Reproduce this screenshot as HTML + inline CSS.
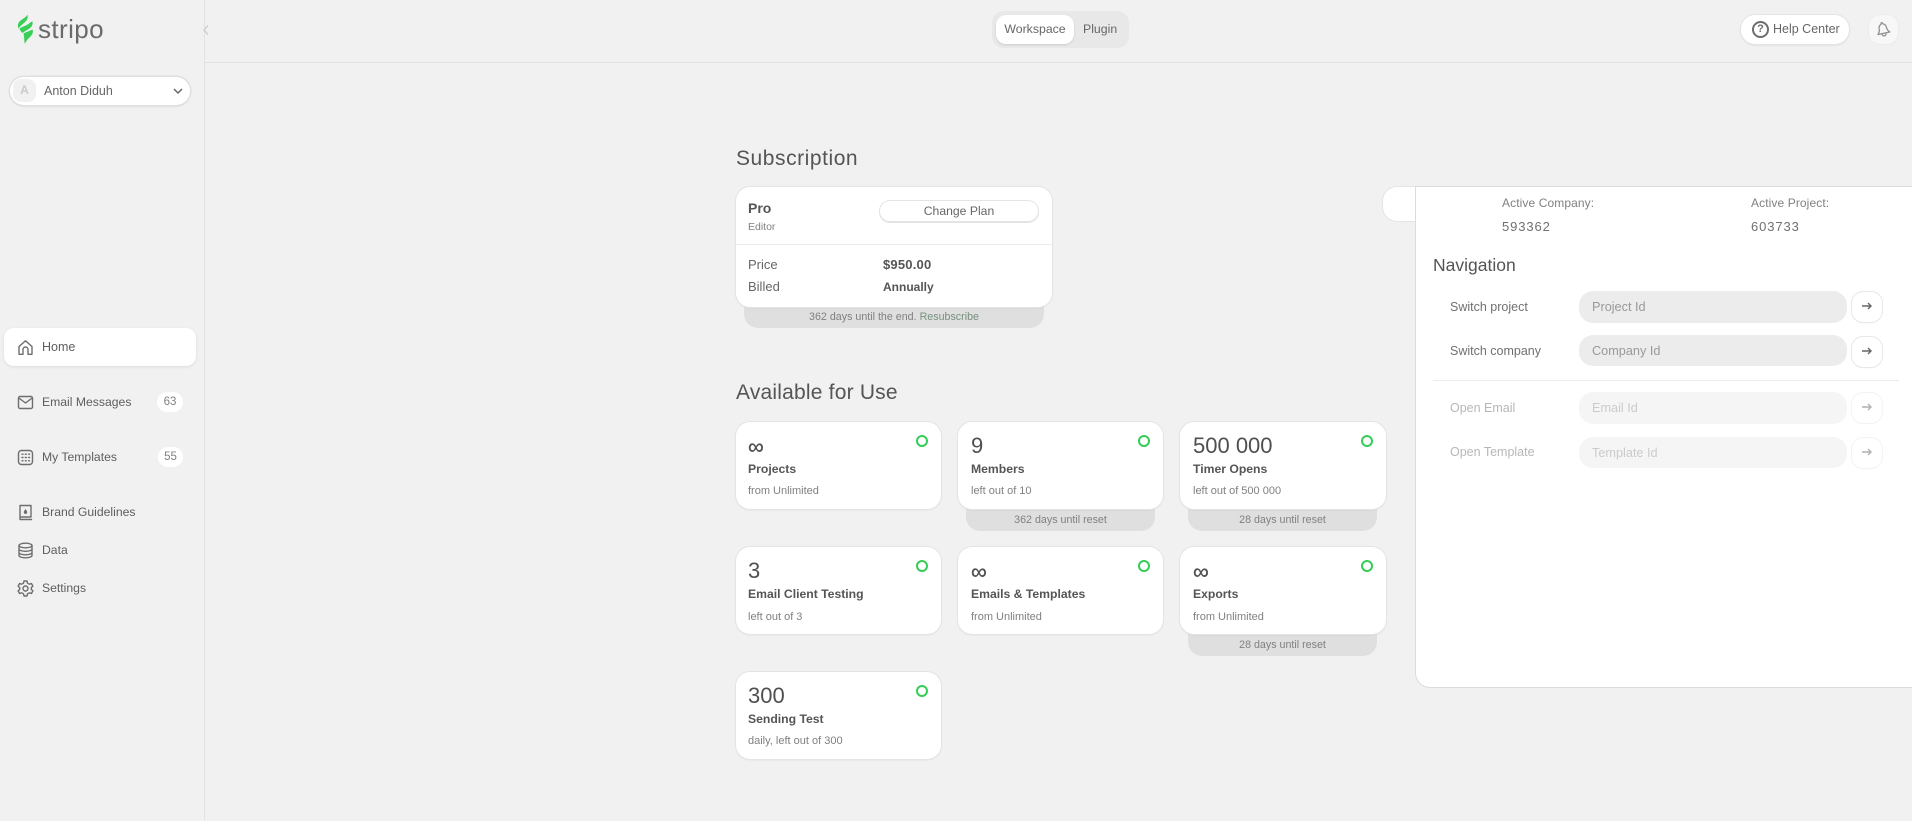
<!DOCTYPE html>
<html><head><meta charset="utf-8"><title>Stripo</title>
<style>
html,body{margin:0;padding:0;width:1912px;height:821px;overflow:hidden;background:#f1f1f1}
body{position:relative;font-family:"Liberation Sans",sans-serif;color:#555}
.a,.t{position:absolute}
.t{white-space:nowrap;line-height:20px;height:20px}
.card{position:absolute;background:#fff;border-radius:14px;box-shadow:0 0 0 1px #e4e4e4,0 1px 2px rgba(0,0,0,.08);}
.foot{position:absolute;background:#dfdfdf;border-radius:0 0 14px 14px;text-align:center;font-size:10.7px;line-height:22px;color:#808080;height:22px}
.dot{position:absolute;width:8.4px;height:8.4px;border:2.8px solid #35cd57;border-radius:50%;margin-top:.5px;margin-left:.5px}
.num{font-size:22px;color:#4f4f4f}
.inf{-webkit-text-stroke:.3px #4f4f4f}
.ti{font-size:12.2px;font-weight:bold;color:#555}
.su{font-size:11px;color:#808080}
.nav{font-size:12.2px;color:#5e5e5e}
.inp{position:absolute;left:1579px;width:268px;height:32px;background:#ececec;border-radius:14px;color:#999;font-size:12.7px;line-height:32px;text-indent:13px}
.btn{position:absolute;left:1852px;width:30px;height:30px;background:#fff;border-radius:11px;box-shadow:0 0 0 1px #e8e8e8,0 1px 1px 0 #e4e4e4}
.btn svg{position:absolute;left:9px;top:8px}
.fade{opacity:.5}
.ic{position:absolute;fill:none;stroke:#6e6e6e;stroke-width:1.4;stroke-linejoin:round;stroke-linecap:round}
.bdg{position:absolute;background:#fff;border-radius:10px;height:20px;line-height:20px;text-align:center;font-size:11.5px;color:#808080}
</style></head><body>

<!-- chrome lines -->
<div class="a" style="left:204px;top:0;width:1px;height:821px;background:#e2e2e2"></div>
<div class="a" style="left:204px;top:62px;width:1708px;height:1px;background:#e2e2e2"></div>

<!-- logo -->
<svg class="a" style="left:16px;top:12px" width="20" height="34" viewBox="0 0 20 34">
<path fill="#37cf55" d="M11.500 2.500 C12 6 11.500 8 8 11 C5.500 13 3.800 14.500 2.500 16.500 C1.500 13.500 1.800 11 4 9 C7 6.500 10 5.500 11.500 2.500Z"/>
<path fill="#37cf55" d="M3.500 16.500 C7 14.300 10.800 13.500 13 11.500 C13.800 10.800 14.500 10.300 16.500 9.500 C17 12.500 16 14.500 13.500 16.500 C10.500 18.500 8 19.500 6.500 21 C5 19.700 4 18.200 3.500 16.500Z"/>
<path fill="#37cf55" d="M7.500 21.500 C10 20 13 19.200 16.500 17.500 C17.500 20 16.500 22.500 14.500 24.500 C12 27 10.300 28.500 8.800 32 C8 28.500 8.500 25 7.500 21.500Z"/>
</svg>
<div class="t" style="left:38px;top:13px;font-size:26px;line-height:32px;height:32px;color:#6a6a6a;letter-spacing:.4px">stripo</div>
<svg class="a" style="left:202px;top:24px" width="8" height="12" viewBox="0 0 8 12"><path d="M6 1.500 L2 6 L6 10.500" fill="none" stroke="#d0d0d0" stroke-width="1.500"/></svg>

<!-- user select -->
<div class="a" style="left:10px;top:77px;width:180px;height:28px;background:#fff;border-radius:14px;box-shadow:0 0 0 1.500px #e0e0e0,0 1px 1px 1px #e0e0e0"></div>
<div class="a" style="left:13px;top:79px;width:23px;height:23px;background:#f1f1f1;border-radius:8px;color:#cacaca;font-size:12px;font-weight:bold;line-height:23px;text-align:center">A</div>
<div class="t" style="left:44px;top:81px;font-size:12.5px;color:#666">Anton Diduh</div>
<svg class="a" style="left:172px;top:87px" width="12" height="8" viewBox="0 0 12 8"><path d="M2 2 L6 6 L10 2" fill="none" stroke="#666" stroke-width="1.500"/></svg>

<!-- nav -->
<div class="a" style="left:4px;top:328px;width:192px;height:38px;background:#fff;border-radius:10px;box-shadow:0 1px 3px rgba(0,0,0,.09)"></div>
<svg class="ic" style="left:17px;top:339px" width="17" height="17" viewBox="0 0 17 17"><path d="M2 7.500 L8.500 1.800 L15 7.500 V15.300 H11 V10.500 A2.500 2.500 0 0 0 6 10.500 V15.300 H2Z"/></svg>
<div class="t nav" style="left:42px;top:337px;font-size:12.500px">Home</div>

<svg class="ic" style="left:17px;top:394px" width="17" height="17" viewBox="0 0 17 17"><rect x="1.500" y="2.500" width="14" height="12" rx="1.500"/><path d="M2.500 4.500 L8.500 9 L14.500 4.500"/></svg>
<div class="t nav" style="left:42px;top:392px">Email Messages</div>
<div class="bdg" style="left:157px;top:392px;width:26px">63</div>

<svg class="ic" style="left:17px;top:449px" width="17" height="17" viewBox="0 0 17 17"><rect x="1.500" y="1.500" width="14" height="14" rx="3"/><path stroke-dasharray="1 2.300" d="M5 5.200 H12.500 M5 8.500 H12.500 M5 11.800 H12.500"/></svg>
<div class="t nav" style="left:42px;top:447px">My Templates</div>
<div class="bdg" style="left:158px;top:447px;width:25px">55</div>

<svg class="ic" style="left:17px;top:504px" width="17" height="17" viewBox="0 0 17 17"><path d="M3 1.500 H14 V13 H3Z M3 13 V15.500 H14.500"/><path d="M8.500 5 C7.500 6.500 6.800 7.200 6.800 8.200 A1.700 1.700 0 0 0 10.200 8.200 C10.200 7.200 9.500 6.500 8.500 5Z" fill="#6e6e6e" stroke="none"/></svg>
<div class="t nav" style="left:42px;top:502px">Brand Guidelines</div>

<svg class="ic" style="left:17px;top:542px" width="17" height="17" viewBox="0 0 17 17"><ellipse cx="8.500" cy="3.500" rx="6.500" ry="2.300"/><path d="M2 3.500 V13.500 C2 14.800 5 15.800 8.500 15.800 C12 15.800 15 14.800 15 13.500 V3.500 M2 7 C2 8.300 5 9.300 8.500 9.300 C12 9.300 15 8.300 15 7 M2 10.500 C2 11.800 5 12.800 8.500 12.800 C12 12.800 15 11.800 15 10.500"/></svg>
<div class="t nav" style="left:42px;top:540px">Data</div>

<svg class="ic" style="left:17px;top:580px" width="17" height="17" viewBox="0 0 17 17"><circle cx="8.500" cy="8.500" r="2.500"/><path d="M7 1 H10 L10.500 3.200 L12.300 4.200 L14.400 3.500 L15.900 6.100 L14.300 7.600 V9.400 L15.900 10.900 L14.400 13.500 L12.300 12.800 L10.500 13.800 L10 16 H7 L6.500 13.800 L4.700 12.800 L2.600 13.500 L1.100 10.900 L2.700 9.400 V7.600 L1.100 6.100 L2.600 3.500 L4.700 4.200 L6.500 3.200Z"/></svg>
<div class="t nav" style="left:42px;top:578px">Settings</div>

<!-- toggle -->
<div class="a" style="left:992px;top:11px;width:137px;height:37px;background:#e8e8e8;border-radius:12px"></div>
<div class="a" style="left:996px;top:15px;width:78px;height:29px;background:#fff;border-radius:10px;box-shadow:0 1px 2px rgba(0,0,0,.12)"></div>
<div class="t" style="left:996px;top:19px;width:78px;text-align:center;font-size:12.3px;color:#666">Workspace</div>
<div class="t" style="left:1083px;top:19px;font-size:12.3px;color:#666">Plugin</div>

<!-- help -->
<div class="a" style="left:1741px;top:15px;width:108px;height:29px;background:#fff;border-radius:14px;box-shadow:0 0 0 1px #e4e4e4,0 1px 1px 1px #e4e4e4"></div>
<div class="a" style="left:1752px;top:21px;width:13px;height:13px;border:2px solid #6e6e6e;border-radius:50%;font-size:11px;font-weight:bold;line-height:13px;text-align:center;color:#6e6e6e">?</div>
<div class="t" style="left:1773px;top:19px;font-size:12.5px;color:#666">Help Center</div>
<div class="a" style="left:1869px;top:15px;width:29px;height:29px;background:#f7f7f7;border-radius:11px;box-shadow:0 0 0 1px #ececec"></div>
<svg class="a" style="left:1875px;top:21px" width="16" height="17" viewBox="0 0 16 17"><path d="M7.500 1.500 A1.500 1.500 0 0 1 9 3 C11 3.800 11.800 5.500 11.800 7.500 C11.800 10 13 11.300 14 12.300 H2 C3 11.300 4.200 10 4.200 7.500 C4.200 5.500 5 3.800 7 3 Z M6 13 A2 2 0 0 0 10 13" fill="none" stroke="#909090" stroke-width="1.300" stroke-linejoin="round" transform="rotate(-12 8 8)"/></svg>

<!-- Subscription -->
<div class="t" style="left:736px;top:149px;font-size:21px;color:#555;letter-spacing:.55px">Subscription</div>
<div class="foot" style="left:744px;top:306px;width:300px;height:22px">362 days until the end. <span style="color:#76917f">Resubscribe</span></div>
<div class="card" style="left:736px;top:187px;width:316px;height:120px"></div>
<div class="t" style="left:748px;top:198px;font-size:14px;font-weight:bold;color:#555">Pro</div>
<div class="t" style="left:748px;top:217px;font-size:10.5px;color:#808080">Editor</div>
<div class="a" style="left:880px;top:201px;width:158px;height:20px;background:#fff;border-radius:11px;box-shadow:0 0 0 1px #e4e4e4,0 1px 0 1px #e4e4e4;text-align:center;font-size:12.2px;line-height:20px;color:#666">Change Plan</div>
<div class="a" style="left:736px;top:244px;width:316px;height:1px;background:#ebebeb"></div>
<div class="t" style="left:748px;top:255px;font-size:13px;color:#666">Price</div>
<div class="t" style="left:748px;top:277px;font-size:13px;color:#666">Billed</div>
<div class="t" style="left:883px;top:255px;font-size:13px;font-weight:bold;color:#555;letter-spacing:.2px">$950.00</div>
<div class="t" style="left:883px;top:277px;font-size:12px;font-weight:bold;color:#555">Annually</div>

<!-- Available -->
<div class="t" style="left:736px;top:383px;font-size:21px;color:#555;letter-spacing:.2px">Available for Use</div>

<div class="foot" style="left:966px;top:508px;width:189px;height:23px;line-height:24px">362 days until reset</div>
<div class="foot" style="left:1188px;top:508px;width:189px;height:23px;line-height:24px">28 days until reset</div>
<div class="foot" style="left:1188px;top:633px;width:189px;height:23px;line-height:24px">28 days until reset</div>

<div class="card" style="left:736px;top:422px;width:205px;height:87px"></div>
<div class="dot" style="left:915px;top:434px"></div>
<div class="t num inf" style="left:748px;top:437px">∞</div>
<div class="t ti" style="left:748px;top:459px">Projects</div>
<div class="t su" style="left:748px;top:481px">from Unlimited</div>

<div class="card" style="left:958px;top:422px;width:205px;height:87px"></div>
<div class="dot" style="left:1137px;top:434px"></div>
<div class="t num" style="left:971px;top:436px">9</div>
<div class="t ti" style="left:971px;top:459px">Members</div>
<div class="t su" style="left:971px;top:481px">left out of 10</div>

<div class="card" style="left:1180px;top:422px;width:206px;height:87px"></div>
<div class="dot" style="left:1360px;top:434px"></div>
<div class="t num" style="left:1193px;top:436px">500 000</div>
<div class="t ti" style="left:1193px;top:459px">Timer Opens</div>
<div class="t su" style="left:1193px;top:481px">left out of 500 000</div>

<div class="card" style="left:736px;top:547px;width:205px;height:87px"></div>
<div class="dot" style="left:915px;top:559px"></div>
<div class="t num" style="left:748px;top:561px">3</div>
<div class="t ti" style="left:748px;top:584px">Email Client Testing</div>
<div class="t su" style="left:748px;top:607px">left out of 3</div>

<div class="card" style="left:958px;top:547px;width:205px;height:87px"></div>
<div class="dot" style="left:1137px;top:559px"></div>
<div class="t num inf" style="left:971px;top:562px">∞</div>
<div class="t ti" style="left:971px;top:584px">Emails &amp; Templates</div>
<div class="t su" style="left:971px;top:607px">from Unlimited</div>

<div class="card" style="left:1180px;top:547px;width:206px;height:87px"></div>
<div class="dot" style="left:1360px;top:559px"></div>
<div class="t num inf" style="left:1193px;top:562px">∞</div>
<div class="t ti" style="left:1193px;top:584px">Exports</div>
<div class="t su" style="left:1193px;top:607px">from Unlimited</div>

<div class="card" style="left:736px;top:672px;width:205px;height:87px"></div>
<div class="dot" style="left:915px;top:684px"></div>
<div class="t num" style="left:748px;top:686px">300</div>
<div class="t ti" style="left:748px;top:709px">Sending Test</div>
<div class="t su" style="left:748px;top:731px">daily, left out of 300</div>

<!-- right panel -->
<div class="a" style="left:1383px;top:187px;width:40px;height:34px;background:#fff;border-radius:14px 0 0 14px;box-shadow:0 0 0 1px #e4e4e4"></div>
<div class="a" style="left:1416px;top:187px;width:510px;height:500px;background:#fff;border-radius:0 0 0 14px;box-shadow:0 0 0 1px #dcdcdc"></div>
<div class="t" style="left:1502px;top:193px;font-size:12px;color:#808080;letter-spacing:.1px">Active Company:</div>
<div class="t" style="left:1751px;top:193px;font-size:12px;color:#808080;letter-spacing:.1px">Active Project:</div>
<div class="t" style="left:1502px;top:217px;font-size:13px;color:#707070;letter-spacing:.9px">593362</div>
<div class="t" style="left:1751px;top:217px;font-size:13px;color:#707070;letter-spacing:.9px">603733</div>
<div class="t" style="left:1433px;top:255px;font-size:17.5px;color:#555">Navigation</div>

<div class="t" style="left:1450px;top:297px;font-size:12.5px;color:#707070">Switch project</div>
<div class="inp" style="top:291px">Project Id</div>
<div class="btn" style="top:292px"><svg width="12" height="12" viewBox="0 0 12 12"><path d="M1 6 H10 M7 3 L10 6 L7 9" fill="none" stroke="#666" stroke-width="1.400"/></svg></div>
<div class="t" style="left:1450px;top:341px;font-size:12.5px;color:#707070">Switch company</div>
<div class="inp" style="top:335px;height:31px;line-height:32px">Company Id</div>
<div class="btn" style="top:337px"><svg width="12" height="12" viewBox="0 0 12 12"><path d="M1 6 H10 M7 3 L10 6 L7 9" fill="none" stroke="#666" stroke-width="1.400"/></svg></div>

<div class="a" style="left:1433px;top:380px;width:466px;height:1px;background:#ececec"></div>

<div class="t fade" style="left:1450px;top:398px;font-size:12.5px;color:#707070">Open Email</div>
<div class="inp fade" style="top:392px">Email Id</div>
<div class="btn fade" style="top:393px"><svg width="12" height="12" viewBox="0 0 12 12"><path d="M1 6 H10 M7 3 L10 6 L7 9" fill="none" stroke="#666" stroke-width="1.400"/></svg></div>
<div class="t fade" style="left:1450px;top:442px;font-size:12.5px;color:#707070">Open Template</div>
<div class="inp fade" style="top:437px;height:31px;line-height:32px">Template Id</div>
<div class="btn fade" style="top:438px"><svg width="12" height="12" viewBox="0 0 12 12"><path d="M1 6 H10 M7 3 L10 6 L7 9" fill="none" stroke="#666" stroke-width="1.400"/></svg></div>

</body></html>
